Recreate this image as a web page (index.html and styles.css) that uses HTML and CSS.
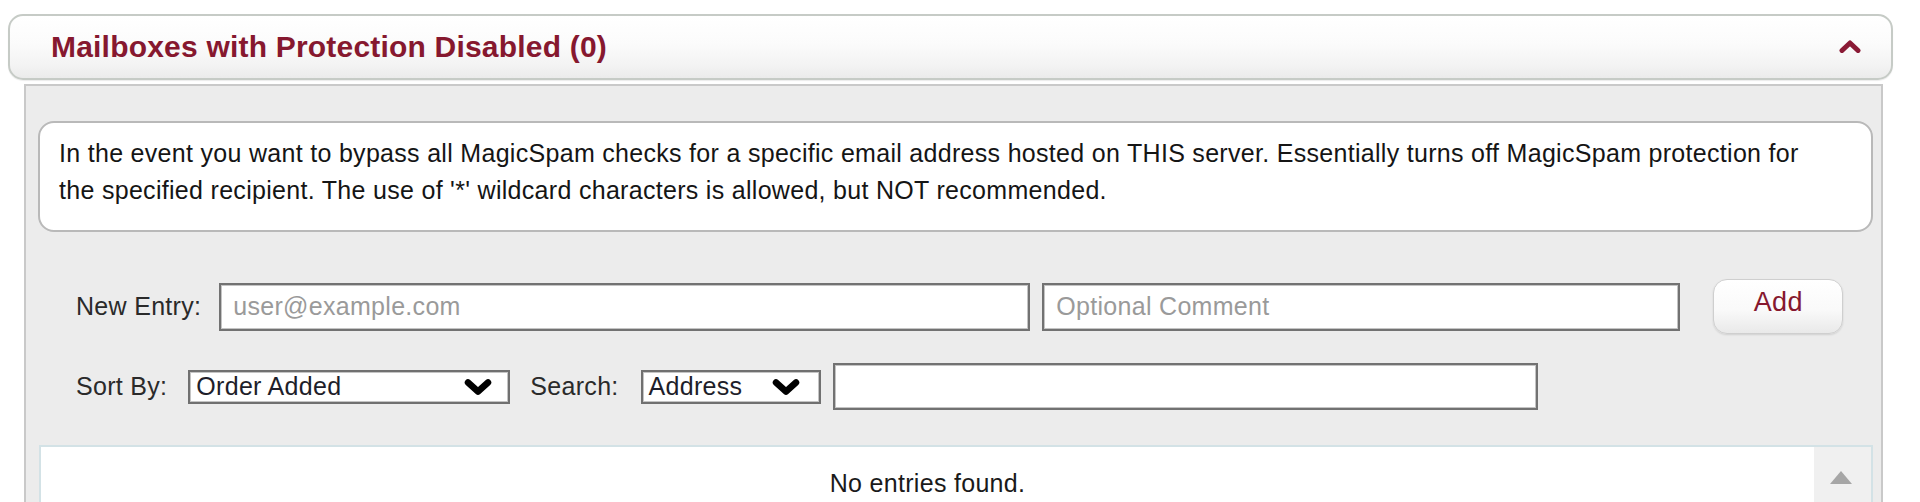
FILE: index.html
```html
<!DOCTYPE html>
<html lang="en">
<head>
<meta charset="utf-8">
<title>Mailboxes with Protection Disabled</title>
<link rel="stylesheet" href="styles.css">
</head>
<body>
<div class="section">
  <div class="header">
    <span class="title">Mailboxes with Protection Disabled (0)</span>
    <svg class="collapse" width="22" height="14" viewBox="0 0 22 14"><polyline points="3,11.5 11,4 19,11.5" fill="none" stroke="#8a1a35" stroke-width="5" stroke-linecap="round" stroke-linejoin="round"/></svg>
  </div>
  <div class="panel">
    <div class="info">In the event you want to bypass all MagicSpam checks for a specific email address hosted on THIS server. Essentially turns off MagicSpam protection for the specified recipient. The use of '*' wildcard characters is allowed, but NOT recommended.</div>

    <div class="row entry-row">
      <label class="label">New Entry:</label>
      <input class="field field-address" type="text" placeholder="user@example.com">
      <input class="field field-comment" type="text" placeholder="Optional Comment">
      <button class="btn-add" type="button">Add</button>
    </div>

    <div class="row filter-row">
      <label class="label">Sort By:</label>
      <div class="select select-sort">
        <span>Order Added</span>
        <svg width="28" height="18" viewBox="0 0 28 18"><polyline points="4,4.5 14,13.5 24,4.5" fill="none" stroke="#000" stroke-width="6.5" stroke-linecap="round" stroke-linejoin="round"/></svg>
      </div>
      <label class="label label-search">Search:</label>
      <div class="select select-search">
        <span>Address</span>
        <svg width="28" height="18" viewBox="0 0 28 18"><polyline points="4,4.5 14,13.5 24,4.5" fill="none" stroke="#000" stroke-width="6.5" stroke-linecap="round" stroke-linejoin="round"/></svg>
      </div>
      <input class="field field-search" type="text">
    </div>

    <div class="list">
      <div class="list-body">No entries found.</div>
      <div class="scrollbar">
        <svg width="22" height="13" viewBox="0 0 22 13"><polygon points="11,0 22,13 0,13" fill="#a6a6a6"/></svg>
      </div>
    </div>
  </div>
</div>
</body>
</html>
```

FILE: styles.css
```css
html, body {
  margin: 0;
  padding: 0;
  background: #ffffff;
}

body {
  font-family: "Liberation Sans", Arial, sans-serif;
  font-size: 25px;
  letter-spacing: 0.3px;
  color: #1a1a1a;
  overflow: hidden;
}

.section {
  padding: 14px 27px 0 8px;
}

.header {
  height: 66px;
  box-sizing: border-box;
  border: 2px solid #c6cbc6;
  border-radius: 15px;
  background: linear-gradient(to bottom, #ffffff 0%, #fbfbfb 45%, #f3f3f3 80%, #ebebeb 100%);
  box-shadow: 0 1px 1px rgba(0, 0, 0, 0.08);
  display: flex;
  align-items: center;
  justify-content: space-between;
  padding: 0 30px 0 41px;
}

.title {
  font-size: 30px;
  font-weight: bold;
  letter-spacing: 0.2px;
  color: #86182f;
  line-height: 1;
  padding-bottom: 1px;
}

.collapse {
  display: block;
  margin-bottom: 2px;
}

.panel {
  margin: 4px 10px 0 16px;
  background: #ececec;
  border: 2px solid #c9c9c9;
  border-bottom: none;
  padding: 35px 8px 0 12px;
  height: 420px;
  box-sizing: border-box;
}

.info {
  background: #ffffff;
  border: 2px solid #b9b9b9;
  border-radius: 16px;
  padding: 12px 50px 21px 19px;
  line-height: 37px;
  color: #151515;
  font-size: 25px;
}

.row {
  display: flex;
  align-items: center;
  padding-left: 38px;
}

.entry-row {
  margin-top: 47px;
  height: 55px;
}

.filter-row {
  margin-top: 29px;
  height: 47px;
}

.label {
  color: #2a2a2a;
  font-size: 25px;
  white-space: nowrap;
}

.field {
  box-sizing: border-box;
  height: 48px;
  border: 2px solid #727272;
  box-shadow: inset 0 0 0 1px #c4c4c4;
  background: #ffffff;
  font-family: "Liberation Sans", Arial, sans-serif;
  font-size: 25px;
  letter-spacing: 0.3px;
  color: #222222;
  padding: 0 12px;
  margin: 0;
  outline: none;
}

.field::placeholder {
  color: #9a9a9a;
}

.field-address {
  width: 811px;
  margin-left: 18px;
}

.field-comment {
  width: 638px;
  margin-left: 12px;
}

.btn-add {
  width: 130px;
  height: 55px;
  margin-left: 33px;
  border: 1px solid #cfcfcf;
  border-radius: 14px;
  background: linear-gradient(to bottom, #ffffff 0%, #fafafa 55%, #e9e9e9 100%);
  box-shadow: 0 1px 2px rgba(0, 0, 0, 0.12);
  font-family: "Liberation Sans", Arial, sans-serif;
  font-size: 27px;
  letter-spacing: 0.3px;
  color: #86182f;
  padding: 0 0 8px 0;
  line-height: 1;
}

.select {
  box-sizing: border-box;
  height: 34px;
  border: 2px solid #707070;
  box-shadow: inset 0 0 0 1px #c4c4c4;
  background: #ffffff;
  display: flex;
  align-items: center;
  justify-content: space-between;
  padding: 0 16px 0 6px;
  font-size: 25px;
  color: #1e1e2a;
}

.select svg {
  display: block;
}

.select-sort {
  width: 322px;
  margin-left: 21px;
}

.label-search {
  margin-left: 20px;
}

.select-search {
  width: 180px;
  margin-left: 22px;
  padding-right: 19px;
}

.field-search {
  width: 705px;
  height: 47px;
  margin-left: 12px;
}

.list {
  margin: 35px 0 0 1px;
  background: #ffffff;
  border: 2px solid #d3e2e6;
  border-bottom: none;
  height: 120px;
  display: flex;
}

.list-body {
  flex: 1;
  text-align: center;
  padding-top: 21px;
  font-size: 25px;
  color: #1a1a1a;
  line-height: 30px;
}

.scrollbar {
  width: 57px;
  background: #f0f0f0;
  display: flex;
  justify-content: center;
  padding-top: 24px;
  padding-right: 4px;
  box-sizing: border-box;
}

.scrollbar svg {
  display: block;
}
```
